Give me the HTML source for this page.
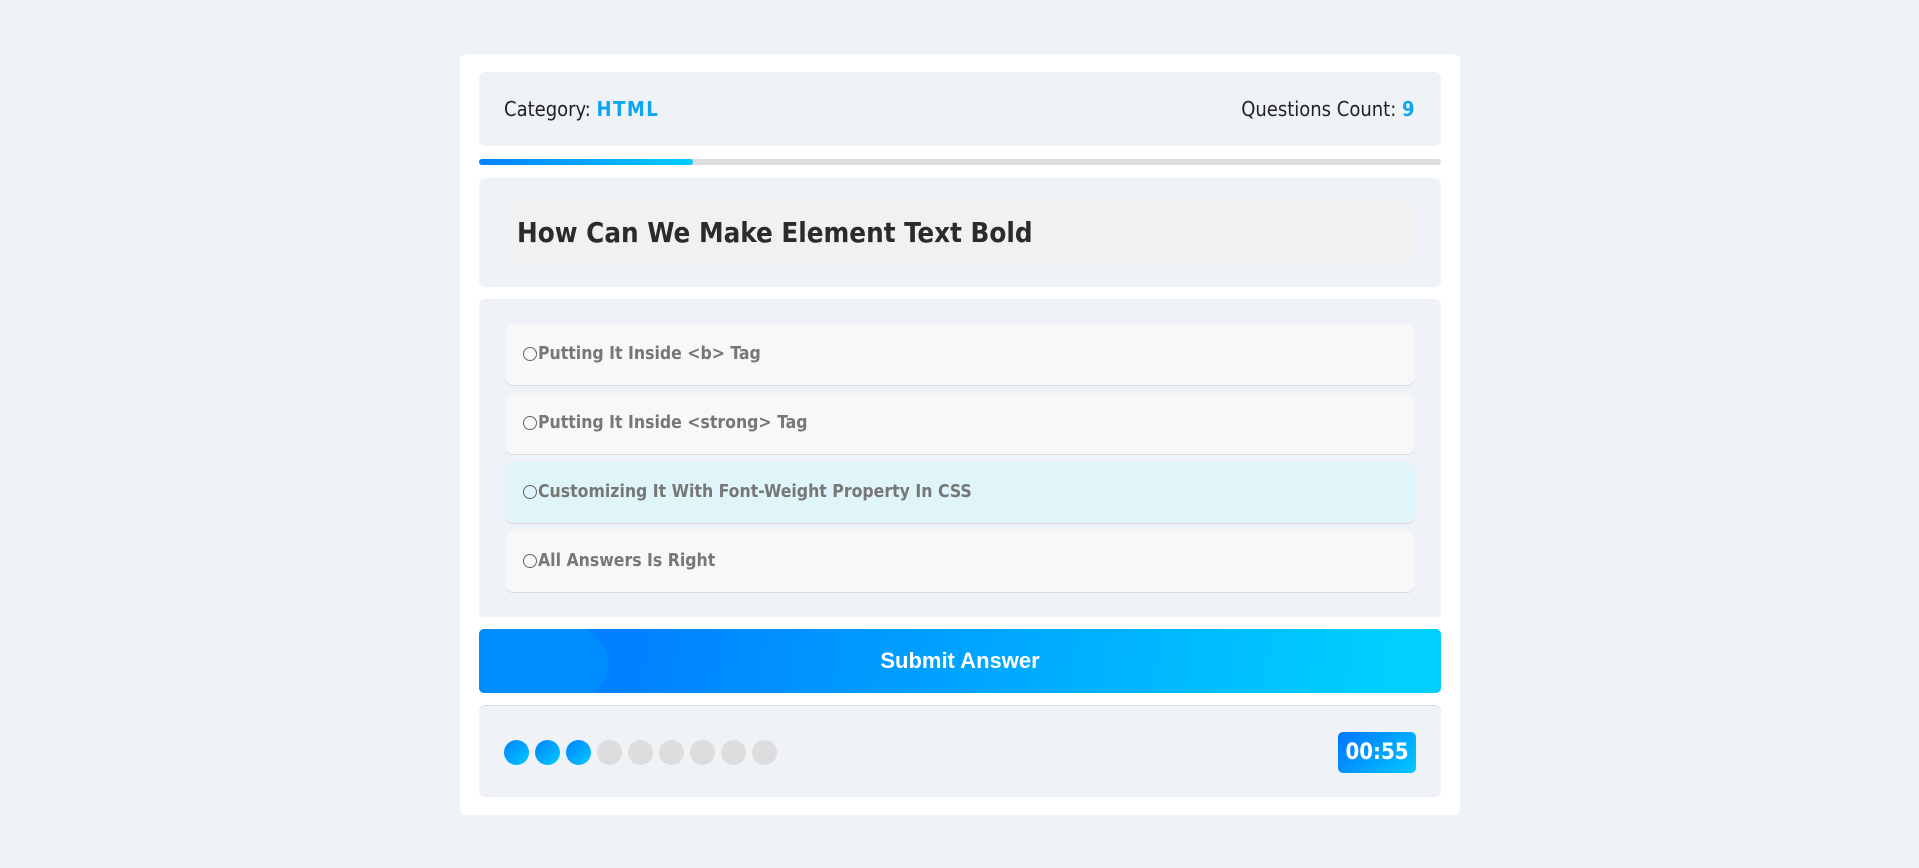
<!DOCTYPE html>
<html><head><meta charset="utf-8"><style>
*{box-sizing:border-box;margin:0;padding:0}
body{width:1919px;height:868px;background:#eff2f7;font-family:"DejaVu Sans","Liberation Sans",sans-serif;position:relative;overflow:hidden}
.c{position:absolute;left:460px;top:54px;width:1000px;height:761px;background:#fff;border-radius:6px}
.p{position:absolute;left:19px;width:962px;background:#eff2f7;border-radius:6px}
.hd{top:18px;height:74px;display:flex;justify-content:space-between;align-items:center;padding:0 25px;font-family:"DejaVu Sans Condensed","DejaVu Sans",sans-serif;font-size:20px;color:#222}
.hd b{color:#0ea5f5;letter-spacing:1.5px}
.bar{position:absolute;left:19px;top:105px;width:962px;height:6px;background:#ddd;border-radius:3px}
.bar i{display:block;width:214px;height:6px;border-radius:3px;background:linear-gradient(90deg,#0080ff,#00ccff)}
.q{top:124px;height:109px}
.q div{position:absolute;left:26px;top:25px;width:910px;height:58px;background:#f1f1f1;border-radius:6px;padding-left:12px;line-height:60px;font-family:"DejaVu Sans Condensed","DejaVu Sans",sans-serif;font-weight:bold;font-size:27.5px;color:#2b2b2b}
.a{top:245px;height:318px}
.o{position:absolute;left:26px;width:910px;height:61px;background:#f8f8f8;border-radius:8px;box-shadow:0 1px 0 #dcdcdc;line-height:61px;padding-left:18px;font-family:"DejaVu Sans Condensed","DejaVu Sans",sans-serif;font-weight:bold;font-size:17.5px;color:#777}
.o span{display:inline-block;width:14px;height:14px;border:1.5px solid #666;border-radius:50%;vertical-align:-2px;margin-right:1px}
.btn{position:absolute;left:19px;top:575px;width:962px;height:64px;border-radius:5px;background:linear-gradient(100deg,#0080ff 15%,#00d0ff 95%);color:#fff;text-align:center;line-height:64px;font-family:"Liberation Sans",sans-serif;font-weight:bold;font-size:22px;overflow:hidden}
.btn:before{content:"";position:absolute;left:-60px;top:-20px;width:190px;height:110px;border-radius:50%;background:rgba(0,150,255,.5)}
.btn span{position:relative}
.f{top:651px;height:92px;border-top:1px solid #ddd}
.d{position:absolute;top:34px;width:25px;height:25px;border-radius:50%;background:#ddd}
.d.on{background:linear-gradient(135deg,#0080ff,#00ccff)}
.t{position:absolute;right:25px;top:26px;width:78px;height:41px;border-radius:5px;background:linear-gradient(135deg,#0075ff,#00c8ff);color:#fff;font-family:"DejaVu Sans Condensed","DejaVu Sans",sans-serif;font-weight:bold;font-size:22px;text-align:center;line-height:41px}
</style></head><body>
<div class="c">
<div class="p hd"><div>Category: <b>HTML</b></div><div>Questions Count: <b>9</b></div></div>
<div class="bar"><i></i></div>
<div class="p q"><div>How Can We Make Element Text Bold</div></div>
<div class="p a">
<div class="o" style="top:25px"><span></span>Putting It Inside &lt;b&gt; Tag</div>
<div class="o" style="top:94px"><span></span>Putting It Inside &lt;strong&gt; Tag</div>
<div class="o" style="top:163px;background:#dff5f9"><span></span>Customizing It With Font-Weight Property In CSS</div>
<div class="o" style="top:232px"><span></span>All Answers Is Right</div>
</div>
<div class="btn"><span>Submit Answer</span></div>
<div class="p f">
<div class="d on" style="left:25px"></div><div class="d on" style="left:56px"></div><div class="d on" style="left:87px"></div>
<div class="d" style="left:118px"></div><div class="d" style="left:149px"></div><div class="d" style="left:180px"></div>
<div class="d" style="left:211px"></div><div class="d" style="left:242px"></div><div class="d" style="left:273px"></div>
<div class="t">00:55</div>
</div>
</div>
</body></html>
